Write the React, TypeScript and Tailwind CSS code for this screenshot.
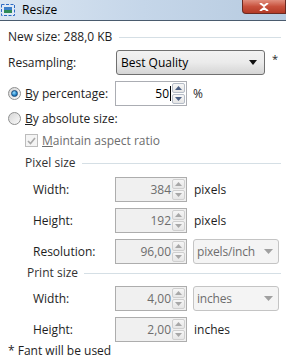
import React from "react";

const font = { fontFamily: '"Open Sans", "Noto Sans", sans-serif' };

function Radio({ checked }: { checked?: boolean }) {
  return (
    <span className="relative inline-flex h-[13px] w-[13px] shrink-0 items-center justify-center rounded-full border border-[#8e8f8f] bg-gradient-to-br from-[#d6d6d6] to-[#fafafa]">
      {checked && (
        <span className="h-[7px] w-[7px] rounded-full border border-[#1b4a7a] bg-[radial-gradient(circle_at_40%_35%,#9be0ff,#1e7fc4_60%,#0b4f8a)]" />
      )}
    </span>
  );
}

function Spin({ enabled }: { enabled?: boolean }) {
  const arrow = enabled ? "#4d6185" : "#a7a7a7";
  const border = enabled ? "border-[#b5bcc7]" : "border-[#cfcfcf]";
  return (
    <div className="flex h-full w-[14px] flex-col gap-px py-px pr-px">
      <div className={`flex flex-1 items-center justify-center rounded-[2px] border ${border} bg-gradient-to-b from-[#f6f6f6] to-[#e6e6e6]`}>
        <svg width="7" height="4" viewBox="0 0 7 4">
          <path d="M0 4 L3.5 0 L7 4 Z" fill={arrow} />
        </svg>
      </div>
      <div className={`flex flex-1 items-center justify-center rounded-[2px] border ${border} bg-gradient-to-b from-[#f6f6f6] to-[#e6e6e6]`}>
        <svg width="7" height="4" viewBox="0 0 7 4">
          <path d="M0 0 L3.5 4 L7 0 Z" fill={arrow} />
        </svg>
      </div>
    </div>
  );
}

function SpinInput({ value, enabled }: { value: string; enabled?: boolean }) {
  return (
    <div
      className={`flex h-[25px] w-[72px] shrink-0 items-stretch border ${
        enabled ? "border-[#abadb3] bg-white text-black" : "border-[#adadad] bg-[#f0f0f0] text-[#6d6d6d]"
      }`}
    >
      <div className="flex flex-1 items-center justify-end pr-px">
        {value}
        {enabled && <span className="ml-px h-[15px] w-px bg-black" />}
      </div>
      <Spin enabled={enabled} />
    </div>
  );
}

function DisabledSelect({ value }: { value: string }) {
  return (
    <div className="flex h-[25px] w-[86px] shrink-0 items-center justify-between rounded-[3px] border border-[#c4c4c4] bg-[#f4f4f4] pl-[3px] pr-[5px] text-[#6d6d6d]">
      <span className="whitespace-nowrap tracking-[-0.2px]">{value}</span>
      <svg width="9" height="5" viewBox="0 0 9 5" className="shrink-0">
        <path d="M0 0 L4.5 5 L9 0 Z" fill="#a0a0a0" />
      </svg>
    </div>
  );
}

function FieldRow({
  label,
  children,
}: {
  label: string;
  children: React.ReactNode;
}) {
  return (
    <div className="flex h-[25px] items-center">
      <span className="w-[82px] shrink-0 pl-[25px] box-content">{label}</span>
      <div className="flex items-center">{children}</div>
    </div>
  );
}

export default function App() {
  return (
    <div className="h-[362px] w-[286px] overflow-hidden bg-white text-[12px] leading-none text-[#1e1e1e]" style={font}>
      {/* Title bar */}
      <div className="relative flex h-[21px] items-center border-b border-[#4a5b6e] bg-gradient-to-r from-[#d9e5f1] via-[#c5d6e9] to-[#b7cbe0]">
        <svg width="16" height="14" viewBox="0 0 16 14">
          <rect x="1.5" y="1.5" width="13" height="11" fill="#dfe9f5" stroke="#2d6bc4" strokeDasharray="3 1.5" />
          <rect x="4" y="4" width="8" height="6" fill="#3b7fc9" />
          <rect x="4" y="7" width="8" height="3" fill="#2e8b57" />
        </svg>
        <span className="ml-[6px] text-[12px] text-black">Resize</span>
        <div className="absolute right-0 top-0 flex h-[14px] w-[44px] items-center justify-center rounded-bl-[4px] border border-t-0 border-[#6b2a22] bg-gradient-to-b from-[#e08e7e] via-[#c8513d] to-[#b33a26]">
          <svg width="10" height="8" viewBox="0 0 10 8">
            <path d="M1 0 L5 3 L9 0 M1 8 L5 5 L9 8" stroke="white" strokeWidth="2" fill="none" />
          </svg>
        </div>
      </div>

      <div className="px-[8px]">
        {/* New size */}
        <div className="mt-[9px] flex h-[14px] items-center">
          <span>New size: 288,0 KB</span>
          <div className="ml-[7px] mr-[-3px] h-px flex-1 bg-[#d5dfe5]" />
        </div>

        {/* Resampling */}
        <div className="mt-[6px] flex h-[25px] items-center">
          <span className="w-[108px] shrink-0">Resampling:</span>
          <div className="flex h-[25px] w-[153px] items-center justify-between rounded-[3px] border border-[#707070] bg-gradient-to-b from-[#f2f2f2] via-[#ebebeb] to-[#d5d5d5] pl-[4px] pr-[7px] text-black">
            <span>Best Quality</span>
            <svg width="8" height="5" viewBox="0 0 8 5">
              <path d="M0 0 L4 5 L8 0 Z" fill="#111" />
            </svg>
          </div>
          <span className="ml-[7px] self-start pt-[3px] text-[11px]">*</span>
        </div>

        {/* By percentage */}
        <div className="mt-[6px] flex h-[25px] items-center">
          <div className="flex w-[107px] shrink-0 items-center gap-[4px]">
            <Radio checked />
            <span>
              <span className="underline">B</span>y percentage:
            </span>
          </div>
          <SpinInput value="50" enabled />
          <span className="ml-[6px]">%</span>
        </div>

        {/* By absolute size */}
        <div className="mt-[6px] flex h-[13px] items-center gap-[4px]">
          <Radio />
          <span>
            <span className="underline">B</span>y absolute size:
          </span>
        </div>

        {/* Maintain aspect ratio */}
        <div className="mt-[9px] flex h-[13px] items-center gap-[4px] pl-[17px] text-[#6d6d6d]">
          <span className="flex h-[13px] w-[13px] items-center justify-center border border-[#bcbcbc] bg-[#f4f4f4]">
            <svg width="9" height="8" viewBox="0 0 9 8">
              <path d="M1 4 L3.5 6.5 L8 1" stroke="#a8a8a8" strokeWidth="1.6" fill="none" />
            </svg>
          </span>
          <span>
            <span className="underline">M</span>aintain aspect ratio
          </span>
        </div>

        {/* Pixel size */}
        <div className="mt-[9px] flex h-[14px] items-center pl-[17px] text-[#333]">
          <span>Pixel size</span>
          <div className="ml-[6px] mr-[-3px] h-px flex-1 bg-[#d5dfe5]" />
        </div>

        <div className="mt-[7px] flex flex-col gap-[6px]">
          <FieldRow label="Width:">
            <SpinInput value="384" />
            <span className="ml-[7px]">pixels</span>
          </FieldRow>
          <FieldRow label="Height:">
            <SpinInput value="192" />
            <span className="ml-[7px]">pixels</span>
          </FieldRow>
          <FieldRow label="Resolution:">
            <SpinInput value="96,00" />
            <div className="ml-[6px]">
              <DisabledSelect value="pixels/inch" />
            </div>
          </FieldRow>
        </div>

        {/* Print size */}
        <div className="mt-[2px] flex h-[14px] items-center pl-[19px] text-[#333]">
          <span>Print size</span>
          <div className="ml-[6px] mr-[-3px] h-px flex-1 bg-[#d5dfe5]" />
        </div>

        <div className="mt-[6px] flex flex-col gap-[6px]">
          <FieldRow label="Width:">
            <SpinInput value="4,00" />
            <div className="ml-[6px]">
              <DisabledSelect value="inches" />
            </div>
          </FieldRow>
          <FieldRow label="Height:">
            <SpinInput value="2,00" />
            <span className="ml-[7px]">inches</span>
          </FieldRow>
        </div>

        <div className="mt-[3px] h-[14px]">* Fant will be used</div>
      </div>
    </div>
  );
}
